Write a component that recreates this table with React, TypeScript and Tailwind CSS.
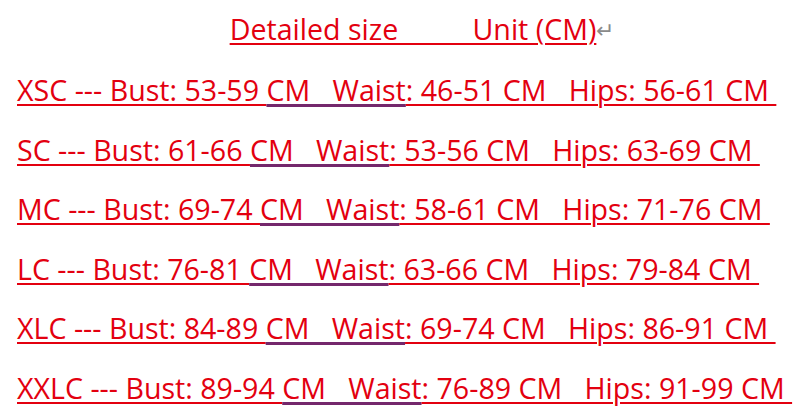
const rows = [
    { size: 'XSC', bust: '53-59', waist: '46-51', hips: '56-61' },
    { size: 'SC', bust: '61-66', waist: '53-56', hips: '63-69' },
    { size: 'MC', bust: '69-74', waist: '58-61', hips: '71-76' },
    { size: 'LC', bust: '76-81', waist: '63-66', hips: '79-84' },
    { size: 'XLC', bust: '84-89', waist: '69-74', hips: '86-91' },
    { size: 'XXLC', bust: '89-94', waist: '76-89', hips: '91-99' },
];

export default function App() {
    return (
        <div
            className="w-[800px] h-[419px] bg-white overflow-hidden text-[28.6px] leading-[58px] text-[#e3000f]"
            style={{ fontFamily: '"Open Sans", "Noto Sans", sans-serif' }}
        >
            <div className="flex justify-center pl-[44px] whitespace-pre">
                <span className="underline decoration-2 underline-offset-[3px] decoration-[#e3000f]">
                    {'Detailed size          Unit (CM)'}
                </span>
                <span className="text-[#8a8a8a] text-[22px]">↵</span>
            </div>

            <div className="pl-[17px] pt-[2px] leading-[59.6px]">
                {rows.map((r) => (
                    <div key={r.size} className="whitespace-pre">
                        <span className="underline decoration-2 underline-offset-[3px] decoration-[#e3000f]">
                            {`${r.size} --- Bust: ${r.bust} `}
                        </span>
                        <span className="underline decoration-[3px] underline-offset-[3px] decoration-[#74286c]">
                            {'CM   Waist'}
                        </span>
                        <span className="underline decoration-2 underline-offset-[3px] decoration-[#e3000f]">
                            {`: ${r.waist} CM   Hips: ${r.hips} CM `}
                        </span>
                    </div>
                ))}
            </div>
        </div>
    );
}
